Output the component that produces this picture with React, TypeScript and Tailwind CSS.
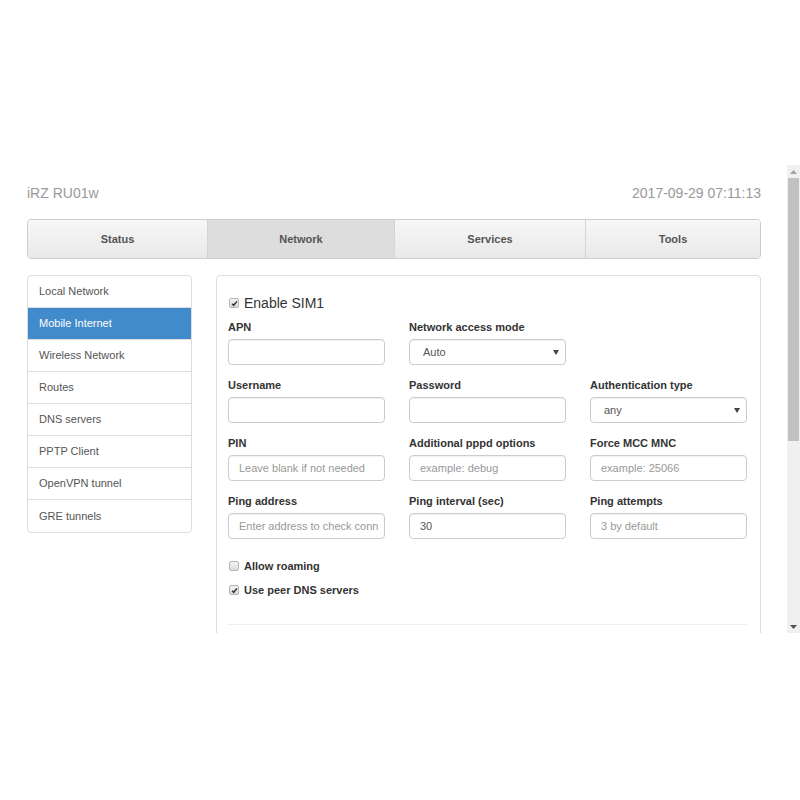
import React from "react";

const Check = ({ checked }: { checked: boolean }) => (
  <span className="inline-flex h-[10px] w-[10px] shrink-0 items-center justify-center rounded-[2px] border border-[#b5b5b5] bg-gradient-to-b from-[#f4f4f4] to-[#dcdcdc]">
    {checked && (
      <svg width="7" height="7" viewBox="0 0 8 8">
        <path d="M1.2 4.2 L3.1 6.1 L6.8 1.6" fill="none" stroke="#333" strokeWidth="1.7" />
      </svg>
    )}
  </span>
);

const Field = ({
  label,
  placeholder,
  value,
  select,
}: {
  label: string;
  placeholder?: string;
  value?: string;
  select?: boolean;
}) => (
  <div className="flex flex-col">
    <div className="h-[16px] text-[11px] font-bold leading-[16px] text-[#333]">{label}</div>
    <div className="mt-[4px] flex h-[26px] items-center overflow-hidden rounded-[4px] border border-[#ccc] bg-white shadow-[inset_0_1px_1px_rgba(0,0,0,0.06)]">
      {select ? (
        <div className="flex w-full items-center justify-between pl-[13px] pr-[6px] text-[11px] text-[#555]">
          <span>{value}</span>
          <svg width="6" height="5" viewBox="0 0 6 5">
            <path d="M0 0 H6 L3 5 Z" fill="#444" />
          </svg>
        </div>
      ) : value ? (
        <span className="pl-[10px] text-[11px] text-[#555]">{value}</span>
      ) : placeholder ? (
        <span className="block w-full overflow-hidden whitespace-nowrap pl-[10px] text-[11px] text-[#999]">{placeholder}</span>
      ) : null}
    </div>
  </div>
);

export default function App() {
  const side = [
    "Local Network",
    "Mobile Internet",
    "Wireless Network",
    "Routes",
    "DNS servers",
    "PPTP Client",
    "OpenVPN tunnel",
    "GRE tunnels",
  ];
  return (
    <div
      className="flex h-[800px] w-[800px] flex-col bg-white"
      style={{ fontFamily: '"Liberation Sans", Arial, sans-serif' }}
    >
      <div className="h-[165px] shrink-0" />
      <div className="flex h-[468px] shrink-0 overflow-hidden">
        <div className="w-[787px] overflow-hidden pl-[27px] pr-[26px]">
          <div className="flex items-center justify-between pt-[18px] text-[14px] leading-[20px] text-[#999]">
            <span>iRZ RU01w</span>
            <span>2017-09-29 07:11:13</span>
          </div>
          <div className="mt-[16px] flex h-[40px] overflow-hidden rounded-[4px] border border-[#ccc] text-[11px] font-bold text-[#555]">
            <div className="flex w-[180px] items-center justify-center border-r border-[#d4d4d4] bg-gradient-to-b from-[#f7f7f7] to-[#e9e9e9] pt-[1px]">
              Status
            </div>
            <div className="flex w-[187px] items-center justify-center border-r border-[#d4d4d4] bg-[#ddd] pt-[1px]">
              Network
            </div>
            <div className="flex w-[191px] items-center justify-center border-r border-[#d4d4d4] bg-gradient-to-b from-[#f7f7f7] to-[#e9e9e9] pt-[1px]">
              Services
            </div>
            <div className="flex flex-1 items-center justify-center bg-gradient-to-b from-[#f7f7f7] to-[#e9e9e9] pt-[1px]">
              Tools
            </div>
          </div>
          <div className="mt-[16px] flex items-start gap-[24px]">
            <div className="w-[165px] shrink-0 overflow-hidden rounded-[4px] border border-[#ddd]">
              {side.map((s, i) => (
                <div
                  key={s}
                  className={
                    "flex h-[32px] items-center pl-[11px] text-[11px] " +
                    (i < side.length - 1 ? "border-b border-[#ddd] " : "") +
                    (i === 1 ? "bg-[#428bca] text-white" : "text-[#555]")
                  }
                >
                  {s}
                </div>
              ))}
            </div>
            <div className="flex-1 rounded-[4px] border border-[#ddd] pl-[11px] pr-[13px] pt-[17px] pb-[40px]">
              <div className="flex h-[20px] items-center gap-[5px] pl-[1px] text-[14px] text-[#333]">
                <Check checked />
                <span>Enable SIM1</span>
              </div>
              <div className="mt-[6px] grid grid-cols-[157px_157px_157px] gap-x-[24px] gap-y-[12px]">
                <Field label="APN" />
                <Field label="Network access mode" value="Auto" select />
                <div />
                <Field label="Username" />
                <Field label="Password" />
                <Field label="Authentication type" value="any" select />
                <Field label="PIN" placeholder="Leave blank if not needed" />
                <Field label="Additional pppd options" placeholder="example: debug" />
                <Field label="Force MCC MNC" placeholder="example: 25066" />
                <Field label="Ping address" placeholder="Enter address to check conn" />
                <Field label="Ping interval (sec)" value="30" />
                <Field label="Ping attempts" placeholder="3 by default" />
              </div>
              <div className="mt-[19px] flex h-[16px] items-center gap-[5px] pl-[1px] text-[11px] font-bold text-[#333]">
                <Check checked={false} />
                <span>Allow roaming</span>
              </div>
              <div className="mt-[8px] flex h-[16px] items-center gap-[5px] pl-[1px] text-[11px] font-bold text-[#333]">
                <Check checked />
                <span>Use peer DNS servers</span>
              </div>
              <div className="mt-[26px] border-t border-[#eee]" />
            </div>
          </div>
        </div>
        <div className="flex w-[13px] shrink-0 flex-col bg-[#f0f0f0]">
          <div className="flex h-[13px] items-center justify-center">
            <svg width="7" height="4" viewBox="0 0 7 4">
              <path d="M0 4 H7 L3.5 0 Z" fill="#a3a3a3" />
            </svg>
          </div>
          <div className="mx-[1px] h-[263px] bg-[#c1c1c1]" />
          <div className="flex-1" />
          <div className="flex h-[13px] items-center justify-center">
            <svg width="7" height="4" viewBox="0 0 7 4">
              <path d="M0 0 H7 L3.5 4 Z" fill="#505050" />
            </svg>
          </div>
        </div>
      </div>
      <div className="flex-1" />
    </div>
  );
}
